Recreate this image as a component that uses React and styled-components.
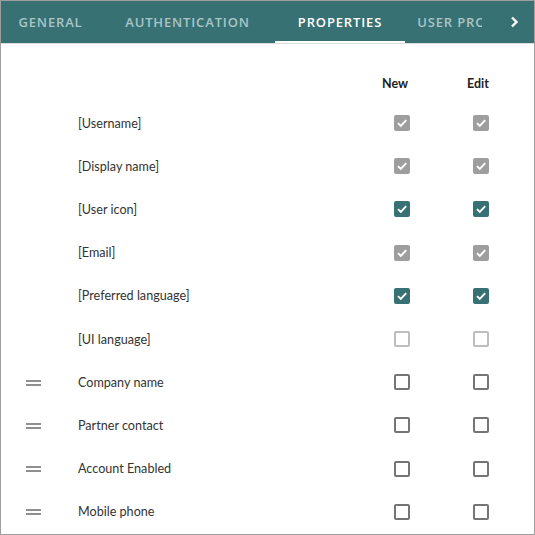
import React from "react";
import styled, { createGlobalStyle } from "styled-components";

const Global = createGlobalStyle`
  html, body { margin: 0; padding: 0; background: #fff; }
  * { box-sizing: border-box; }
`;

const Frame = styled.div`
  width: 535px;
  height: 535px;
  border: 1px solid #9e9e9e;
  overflow: hidden;
  background: #fff;
  font-family: Lato, "Open Sans", sans-serif;
`;

const TabBar = styled.div`
  display: flex;
  height: 43px;
  background: #387174;
  border-bottom: 1px solid #dcdcdc;
`;

const TabStrip = styled.div`
  display: flex;
  width: 481px;
  overflow: hidden;
`;

const Tab = styled.div`
  flex: 0 0 ${(p) => p.w}px;
  display: flex;
  align-items: center;
  justify-content: center;
  white-space: nowrap;
  font-family: "Open Sans", sans-serif;
  font-weight: 600;
  font-size: 13px;
  letter-spacing: 0.85px;
  color: ${(p) => (p.active ? "#ffffff" : "#a9c5c6")};
  border-bottom: 2px solid ${(p) => (p.active ? "#ffffff" : "transparent")};
  padding-top: 2px;
`;

const ScrollBtn = styled.div`
  flex: 1;
  display: flex;
  align-items: center;
  justify-content: center;
  padding-left: 12px;
`;

const Table = styled.div`
  display: grid;
  grid-template-columns: 77px 1fr 79px 79px 14px;
`;

const HeaderCell = styled.div`
  height: 57.5px;
  padding-top: 21px;
  display: flex;
  align-items: center;
  justify-content: center;
  padding-right: ${(p) => p.pr || 0}px;
  font-weight: 700;
  font-size: 12.5px;
  color: #222;
`;

const Cell = styled.div`
  height: 43.2px;
  display: flex;
  align-items: center;
  justify-content: ${(p) => (p.center ? "center" : "flex-start")};
`;

const Label = styled.span`
  font-size: 12.6px;
  color: #333;
`;

const Handle = styled.div`
  margin-left: 25px;
  margin-top: 1px;
  width: 15px;
  height: 6px;
  border-top: 2px solid #8f8f8f;
  border-bottom: 2px solid #8f8f8f;
`;

const Box = styled.div`
  width: 16px;
  height: 16px;
  border-radius: 2px;
  display: flex;
  align-items: center;
  justify-content: center;
  background: ${(p) =>
    p.checked ? (p.disabled ? "#9e9e9e" : "#387174") : "#fff"};
  border: ${(p) =>
    p.checked ? "none" : `2px solid ${p.disabled ? "#bdbdbd" : "#757575"}`};
`;

const Check = ({ checked, disabled }) => (
  <Box checked={checked} disabled={disabled}>
    {checked && (
      <svg width="12" height="12" viewBox="0 0 12 12">
        <path
          d="M2 6.2 L4.8 9 L10.2 3.2"
          fill="none"
          stroke="#fff"
          strokeWidth="1.9"
        />
      </svg>
    )}
  </Box>
);

const rows = [
  { label: "[Username]", locked: true, checked: true, disabled: true },
  { label: "[Display name]", locked: true, checked: true, disabled: true },
  { label: "[User icon]", locked: true, checked: true },
  { label: "[Email]", locked: true, checked: true, disabled: true },
  { label: "[Preferred language]", locked: true, checked: true },
  { label: "[UI language]", locked: true, disabled: true },
  { label: "Company name" },
  { label: "Partner contact" },
  { label: "Account Enabled" },
  { label: "Mobile phone" },
];

const tabs = [
  { name: "GENERAL", w: 99 },
  { name: "AUTHENTICATION", w: 175 },
  { name: "PROPERTIES", w: 130, active: true },
  { name: "USER PROFILE", w: 122 },
];

export default function App() {
  return (
    <Frame>
      <Global />
      <TabBar>
        <TabStrip>
          {tabs.map((t) => (
            <Tab key={t.name} w={t.w} active={t.active}>
              {t.name}
            </Tab>
          ))}
        </TabStrip>
        <ScrollBtn>
          <svg width="9" height="12" viewBox="0 0 9 12">
            <path
              d="M2 1.5 L6.5 6 L2 10.5"
              fill="none"
              stroke="#fff"
              strokeWidth="2.4"
            />
          </svg>
        </ScrollBtn>
      </TabBar>
      <Table>
        <HeaderCell />
        <HeaderCell />
        <HeaderCell pr={13}>New</HeaderCell>
        <HeaderCell pr={5}>Edit</HeaderCell>
        <HeaderCell />
        {rows.map((r) => (
          <React.Fragment key={r.label}>
            <Cell>{!r.locked && <Handle />}</Cell>
            <Cell>
              <Label>{r.label}</Label>
            </Cell>
            <Cell center>
              <Check checked={r.checked} disabled={r.disabled} />
            </Cell>
            <Cell center>
              <Check checked={r.checked} disabled={r.disabled} />
            </Cell>
            <Cell />
          </React.Fragment>
        ))}
      </Table>
    </Frame>
  );
}
